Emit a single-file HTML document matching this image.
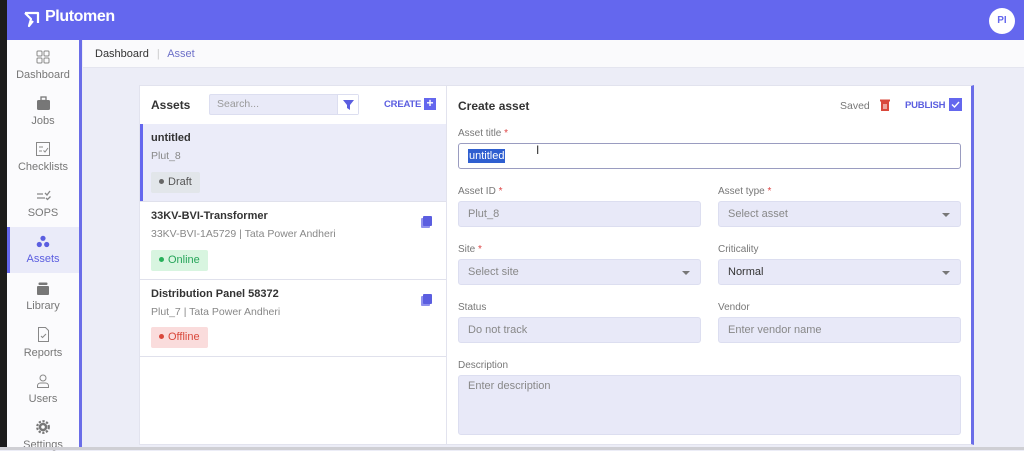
<!DOCTYPE html>
<html><head><meta charset="utf-8"><style>
*{box-sizing:border-box;margin:0;padding:0}
body{width:1024px;height:450px;overflow:hidden;font-family:"Liberation Sans",sans-serif;background:#ecedf7;position:relative;color:#333}
.abs{position:absolute}
.hdr{left:0;top:0;width:1024px;height:40px;background:#6467ee}
.strip{left:0;top:0;width:7px;height:450px;background:#1c1c1c}
.side{left:7px;top:40px;width:75px;height:410px;background:#fbfbfd;border-right:3px solid #6a6de8}
.nav{position:absolute;left:0;width:72px;text-align:center;font-size:11px;color:#777}
.nav svg{display:block;margin:0 auto 5px}
.crumb{left:83px;top:40px;width:941px;height:28px;background:#fafafc;font-size:11px;line-height:28px;padding-left:12px;border-bottom:1px solid #e4e5ef}
.card{background:#fff;border:1px solid #e2e3ee}
.lbl{position:absolute;font-size:10px;color:#777}
.lbl b{color:#d44;font-weight:normal}
.inp{position:absolute;height:26px;background:#e8e9f8;border:1px solid #dcdef0;border-radius:3px;font-size:11px;color:#888;line-height:24px;padding-left:9px}
.arr{position:absolute;right:10px;top:11px;border:4px solid transparent;border-top:4px solid #777;border-bottom:0}
.tag{position:absolute;left:11px;height:21px;font-size:11px;line-height:21px;padding:0 8px;border-radius:2px}
.dot{display:inline-block;width:5px;height:5px;border-radius:50%;margin-right:4px;vertical-align:1px}
.t1{position:absolute;left:11px;font-size:11px;font-weight:bold;color:#333}
.t2{position:absolute;left:11px;font-size:10.5px;color:#888}
.cp{position:absolute;right:14px;width:9px;height:10px;background:#5b5ee0;border-radius:1px;box-shadow:-2px 2px 0 #8f91ee}
</style></head><body>
<div class="abs hdr"></div>
<div class="abs strip"></div>
<svg class="abs" style="left:22px;top:9px" width="20" height="20" viewBox="0 0 20 20"><path d="M3 4 H16 V14 M3 4 L9 10 L7 17 L11 12" fill="none" stroke="#fff" stroke-width="2.2" stroke-linejoin="round"/></svg>
<div class="abs" style="left:45px;top:8px;color:#fff;font-size:16px;font-weight:bold;letter-spacing:-0.4px">Plutomen</div>
<div class="abs" style="left:989px;top:8px;width:26px;height:26px;border-radius:50%;background:#fff;color:#6467ee;font-size:10px;font-weight:bold;text-align:center;line-height:26px">PI</div>
<div class="abs side">
 <div class="nav" style="top:10px"><svg width="14" height="14"><rect x="1" y="1" width="5" height="5" rx="1" fill="none" stroke="#888"/><rect x="8" y="1" width="5" height="5" rx="1" fill="none" stroke="#888"/><rect x="1" y="8" width="5" height="5" rx="1" fill="none" stroke="#888"/><rect x="8" y="8" width="5" height="5" rx="1" fill="none" stroke="#888"/></svg>Dashboard</div>
 <div class="nav" style="top:56px"><svg width="15" height="14"><rect x="1" y="4" width="13" height="10" rx="1.5" fill="#777"/><rect x="5" y="1" width="5" height="3.5" fill="none" stroke="#777" stroke-width="1.3"/></svg>Jobs</div>
 <div class="nav" style="top:102px"><svg width="14" height="14"><rect x="0.5" y="0.5" width="13" height="13" fill="none" stroke="#888"/><path d="M3 5h4M3 9h3M7.5 8.5l1.5 1.5L12 6" stroke="#888" fill="none"/></svg>Checklists</div>
 <div class="nav" style="top:149px"><svg width="15" height="13"><path d="M1 5h6M1 9h8M9 4l2 2 3-4M10 9l1.5 1.5 3-3" stroke="#888" fill="none" stroke-width="1.3"/></svg>SOPS</div>
 <div style="position:absolute;left:0;top:187px;width:72px;height:46px;background:#eaebf9;border-left:3px solid #6467ee"></div>
 <div class="nav" style="top:195px;color:#5b5ee0"><svg width="14" height="13"><circle cx="7" cy="3.3" r="2.6" fill="#5b5ee0"/><circle cx="3.3" cy="9.5" r="2.6" fill="#5b5ee0"/><circle cx="10.7" cy="9.5" r="2.6" fill="#5b5ee0"/></svg>Assets</div>
 <div class="nav" style="top:241px"><svg width="14" height="14"><rect x="1" y="5" width="12" height="9" rx="1" fill="#777"/><rect x="2.5" y="1.5" width="9" height="2.5" rx="1" fill="#777"/></svg>Library</div>
 <div class="nav" style="top:287px"><svg width="13" height="15"><path d="M1.5 .5h7l3 3v11h-10z M4 9l1.5 1.5L9 7" fill="none" stroke="#888"/></svg>Reports</div>
 <div class="nav" style="top:334px"><svg width="14" height="14"><circle cx="7" cy="4" r="3" fill="none" stroke="#888"/><path d="M1.5 13.5h11v-2a3 3 0 0 0-3-2.5h-5a3 3 0 0 0-3 2.5z" fill="none" stroke="#888"/></svg>Users</div>
 <div class="nav" style="top:380px"><svg width="14" height="14"><circle cx="7" cy="7" r="4.3" fill="#777"/><circle cx="7" cy="7" r="5.8" fill="none" stroke="#777" stroke-width="2.2" stroke-dasharray="2.2 1.6"/><circle cx="7" cy="7" r="1.8" fill="#fff"/></svg>Settings</div>
</div>
<div class="abs crumb">Dashboard <span style="color:#ccc;margin:0 5px">|</span> <span style="color:#6d70c8">Asset</span></div>

<div class="abs card" style="left:139px;top:85px;width:308px;height:360px">
 <div style="position:absolute;left:11px;top:12px;font-size:12px;font-weight:bold">Assets</div>
 <div style="position:absolute;left:69px;top:8px;width:150px;height:21px;background:#e9eaf8;border:1px solid #dcdef0;border-radius:2px;font-size:10.5px;color:#999;line-height:19px;padding-left:7px">Search...<div style="position:absolute;right:0;top:0;width:21px;height:19px;background:#fff;border-left:1px solid #dcdef0"><svg width="21" height="19"><path d="M5 5h11l-4 5v5l-3-2v-3z" fill="#5b5ee0"/></svg></div></div>
 <div style="position:absolute;left:244px;top:13px;font-size:9.5px;font-weight:bold;color:#5b5ee0;letter-spacing:-0.2px">CREATE</div>
 <div style="position:absolute;left:284px;top:12px;width:12px;height:12px;background:#6467ee;color:#fff;font-size:12px;line-height:11px;text-align:center;font-weight:bold">+</div>
 <div style="position:absolute;left:0;top:38px;width:306px;height:77px;background:#ebecf9;border-left:3px solid #6467ee"></div>
 <div class="t1" style="top:46px">untitled</div><div class="t2" style="top:64px">Plut_8</div>
 <div class="tag" style="top:86px;background:#e2e6ea;color:#555"><span class="dot" style="background:#666"></span>Draft</div>
 <div style="position:absolute;left:0;top:115px;width:306px;border-top:1px solid #e0e1ec"></div>
 <div class="t1" style="top:124px">33KV-BVI-Transformer</div><div class="t2" style="top:142px">33KV-BVI-1A5729 | Tata Power Andheri</div>
 <div class="cp" style="top:130px"></div>
 <div class="tag" style="top:164px;background:#d8f5e0;color:#27a55a"><span class="dot" style="background:#27b05a"></span>Online</div>
 <div style="position:absolute;left:0;top:193px;width:306px;border-top:1px solid #e0e1ec"></div>
 <div class="t1" style="top:202px">Distribution Panel 58372</div><div class="t2" style="top:220px">Plut_7 | Tata Power Andheri</div>
 <div class="cp" style="top:208px"></div>
 <div class="tag" style="top:241px;background:#fadcdc;color:#d9483b"><span class="dot" style="background:#d9483b"></span>Offline</div>
 <div style="position:absolute;left:0;top:270px;width:306px;border-top:1px solid #e0e1ec"></div>
</div>

<div class="abs card" style="left:446px;top:85px;width:528px;height:360px;border-right:3px solid #6a6de8">
 <div style="position:absolute;left:11px;top:13px;font-size:12px;font-weight:bold">Create asset</div>
 <div style="position:absolute;left:393px;top:14px;font-size:10.5px;color:#777">Saved</div>
 <svg style="position:absolute;left:433px;top:13px" width="10" height="12"><rect x="1" y="2" width="8" height="10" fill="#d9483b"/><rect x="0" y="0.5" width="10" height="2" fill="#d9483b"/><path d="M4 5v5M6 5v5" stroke="#fff"/></svg>
 <div style="position:absolute;left:458px;top:14px;font-size:9.5px;font-weight:bold;color:#5b5ee0;letter-spacing:-0.2px">PUBLISH</div>
 <svg style="position:absolute;left:502px;top:12px" width="13" height="13"><rect width="13" height="13" fill="#6467ee"/><path d="M3 6.5l2.5 2.5 4.5-5" stroke="#fff" fill="none" stroke-width="1.4"/></svg>
</div>
<div class="lbl" style="left:458px;top:128px">Asset title <b>*</b></div>
<div class="inp" style="left:458px;top:143px;width:503px;background:#fff;border-color:#9a9cc0;color:#333"><span style="background:#2f5fd0;color:#fff;padding:1px 1px">untitled</span></div>
<div class="abs" style="left:536px;top:143px;font-size:12px;color:#333">I</div>
<div class="lbl" style="left:458px;top:186px">Asset ID <b>*</b></div>
<div class="inp" style="left:458px;top:201px;width:243px">Plut_8</div>
<div class="lbl" style="left:718px;top:186px">Asset type <b>*</b></div>
<div class="inp" style="left:718px;top:201px;width:243px">Select asset<div class="arr"></div></div>
<div class="lbl" style="left:458px;top:244px">Site <b>*</b></div>
<div class="inp" style="left:458px;top:259px;width:243px">Select site<div class="arr"></div></div>
<div class="lbl" style="left:718px;top:244px">Criticality</div>
<div class="inp" style="left:718px;top:259px;width:243px;color:#333">Normal<div class="arr"></div></div>
<div class="lbl" style="left:458px;top:302px">Status</div>
<div class="inp" style="left:458px;top:317px;width:243px">Do not track</div>
<div class="lbl" style="left:718px;top:302px">Vendor</div>
<div class="inp" style="left:718px;top:317px;width:243px">Enter vendor name</div>
<div class="lbl" style="left:458px;top:360px">Description</div>
<div class="inp" style="left:458px;top:375px;width:503px;height:60px;line-height:20px">Enter description</div>
<div class="abs" style="left:0;top:447px;width:1024px;height:3px;background:#cfcfd4"></div>
</body></html>
